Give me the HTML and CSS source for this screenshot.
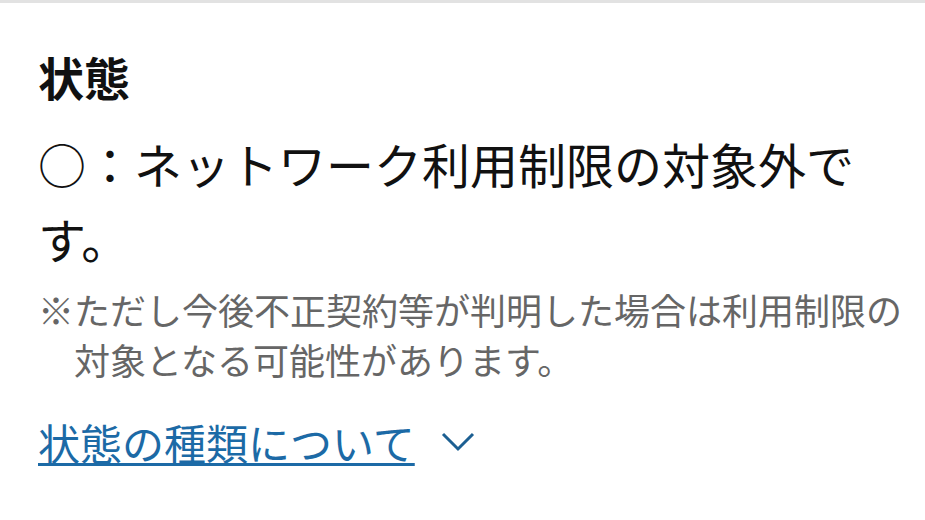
FILE: index.html
```html
<!DOCTYPE html>
<html lang="ja">
<head>
<meta charset="utf-8">
<link rel="stylesheet" href="styles.css">
</head>
<body>
<div class="topbar"></div>
<section class="status">
  <h2 class="title">状態</h2>
  <p class="value">○：ネットワーク利用制限の対象外です。</p>
  <p class="note">※ただし今後不正契約等が判明した場合は利用制限の対象となる可能性があります。</p>
  <div class="more">
    <a class="more-link" href="#">状態の種類について</a>
    <svg class="chev" width="34" height="22" viewBox="0 0 34 22"><path d="M2 3 L17 18 L32 3" fill="none" stroke="#1c5f92" stroke-width="3"/></svg>
  </div>
</section>
</body>
</html>
```
FILE: styles.css
```css
html, body { margin: 0; padding: 0; background: #fff; }
body { font-family: "Noto Sans CJK JP", "Noto Sans", sans-serif; color: #111; }
.topbar { height: 3px; background: #e2e2e2; }
.status { padding: 0 30px 0 38px; }
.title { margin: 43px 0 0; font-size: 46px; line-height: 60px; font-weight: 700; color: #111; }
.value { margin: 20px 0 0; font-size: 48px; line-height: 75px; font-weight: 400; width: 830px; }
.note { margin: 8px 0 0; font-size: 36px; line-height: 50px; color: #666; padding-left: 36px; text-indent: -36px; width: 830px; }
.more { margin-top: 30px; display: flex; align-items: center; gap: 26px; }
.more-link { font-size: 42px; line-height: 56px; color: #1c6aa6; text-decoration: underline; text-decoration-thickness: 3px; text-underline-offset: 3px; }
.chev { display: block; }
```
